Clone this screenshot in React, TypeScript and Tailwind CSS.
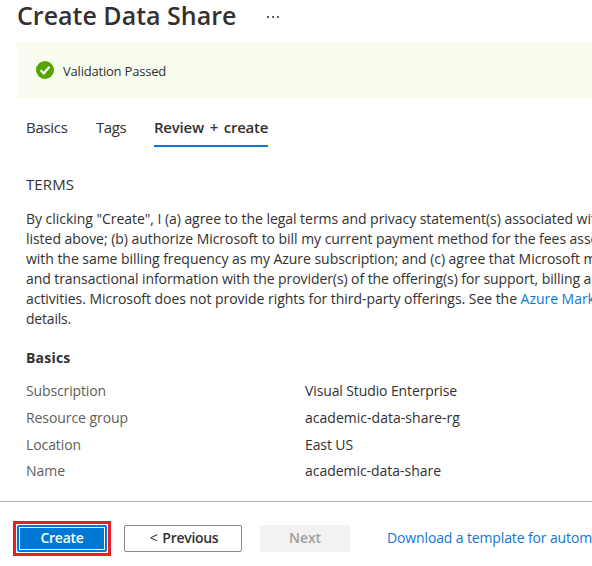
const termsLines = [
  {
    text: 'By clicking "Create", I (a) agree to the legal terms and privacy statement(s) associated with',
    spacing: "tracking-[-0.042px]",
  },
  {
    text: "listed above; (b) authorize Microsoft to bill my current payment method for the fees associated",
    spacing: "tracking-[-0.043px]",
  },
  {
    text: "with the same billing frequency as my Azure subscription; and (c) agree that Microsoft may",
    spacing: "tracking-[-0.041px]",
  },
  {
    text: "and transactional information with the provider(s) of the offering(s) for support, billing and",
    spacing: "tracking-[-0.072px]",
  },
];

const basics = [
  { label: "Subscription", labelSpacing: "tracking-[-0.13px]", value: "Visual Studio Enterprise", valueSpacing: "tracking-[-0.116px]" },
  { label: "Resource group", labelSpacing: "tracking-[-0.072px]", value: "academic-data-share-rg", valueSpacing: "tracking-[0.024px]" },
  { label: "Location", labelSpacing: "tracking-[-0.093px]", value: "East US", valueSpacing: "tracking-[-0.106px]" },
  { label: "Name", labelSpacing: "tracking-[-0.036px]", value: "academic-data-share", valueSpacing: "tracking-[-0.034px]" },
];

function Header() {
  return (
    <header className="flex h-[42px] shrink-0 items-start pl-[17px]">
      <h1 className="w-[250px] text-[25px] leading-[30px] font-semibold">Create Data Share</h1>
      <button aria-label="More" className="flex h-[33px] items-center gap-[3px]">
        <span className="size-[2px] rounded-full bg-[#323130]" />
        <span className="size-[2px] rounded-full bg-[#323130]" />
        <span className="size-[2px] rounded-full bg-[#323130]" />
      </button>
    </header>
  );
}

function ValidationBanner() {
  return (
    <div className="ml-[17px] flex h-14 shrink-0 items-center bg-[#f8fdef] pl-[19px]">
      <svg viewBox="0 0 18 18" className="size-[18px]">
        <circle cx="9" cy="9" r="9" fill="#57a300" />
        <path d="M4.6 9.3 7.7 12.3 13.5 5.8" fill="none" stroke="#fff" strokeWidth="2.2" />
      </svg>
      <span className="pt-px pl-[9px] text-[13px] leading-5 tracking-[-0.205px]">Validation Passed</span>
    </div>
  );
}

function Tabs() {
  return (
    <nav className="flex h-[49px] shrink-0 items-end pl-[26px] text-[15px]">
      <span className="mr-[28px] h-[31px] w-[42px] tracking-[-0.3px]">Basics</span>
      <span className="mr-[28px] h-[31px] w-[30px] tracking-[-0.4px]">Tags</span>
      <span className="h-[31px] w-[114px] border-b-2 border-[#0f78d4] font-semibold tracking-[-0.22px] [word-spacing:2px]">Review + create</span>
    </nav>
  );
}

function Terms() {
  return (
    <section className="pt-[27px] pl-[26px]">
      <h2 className="text-[15px] leading-5 tracking-[0.1px]">TERMS</h2>
      <div className="pt-[15px] leading-5">
        {termsLines.map((line) => (
          <p key={line.text} className={line.spacing}>{line.text}</p>
        ))}
        <p className="tracking-[-0.036px]">
          activities. Microsoft does not provide rights for third-party offerings. See the{" "}
          <a className="text-[#0f78d4]">Azure Marketplace</a>
        </p>
        <p className="tracking-[-0.202px]">details.</p>
      </div>
    </section>
  );
}

function Basics() {
  return (
    <section className="pt-[19px] pl-[26px] leading-5">
      <h2 className="pb-[10px] font-bold tracking-[0.208px]">Basics</h2>
      <dl>
        {basics.map((row) => (
          <div key={row.label} className="flex h-[26.7px] items-center">
            <dt className={`w-[279px] text-[#605e5c] ${row.labelSpacing}`}>{row.label}</dt>
            <dd className={row.valueSpacing}>{row.value}</dd>
          </div>
        ))}
      </dl>
    </section>
  );
}

function Footer() {
  return (
    <footer className="flex h-[65px] shrink-0 items-start border-t border-[#b3b3b3] pt-[19px] pl-[13px] leading-5 font-semibold">
      <div className="h-[35px] w-[98px] shrink-0 border-[3px] border-[#ed1c24] p-px">
        <button className="h-[27px] w-[90px] rounded-[2px] bg-[#0078d4] p-[2px] text-white">
          <span className="flex h-full items-center justify-center border border-white pb-[2px] tracking-[-0.285px]">Create</span>
        </button>
      </div>
      <button className="mt-1 ml-[13px] flex h-[27px] w-[118px] shrink-0 items-center justify-center rounded-[2px] border border-[#8a8886] pb-[2px] pl-[2px] tracking-[-0.294px]">
        <span className="mr-[5px] text-[14px] font-normal">&lt;</span>Previous
      </button>
      <button className="mt-1 ml-[18px] h-[27px] w-[90px] shrink-0 rounded-[2px] bg-[#f3f2f1] pb-[2px] tracking-[-0.07px] text-[#a19f9d]">Next</button>
      <a className="mt-[7px] ml-[37px] shrink-0 font-normal tracking-[-0.13px] text-[#0f78d4]">Download a template for automation</a>
    </footer>
  );
}

export default function App() {
  return (
    <div className="flex h-[566px] w-[592px] flex-col overflow-hidden bg-white font-['Open_Sans','Noto_Sans',sans-serif] text-[14px] whitespace-nowrap text-[#323130]">
      <Header />
      <ValidationBanner />
      <Tabs />
      <div className="h-[354px] shrink-0">
        <Terms />
        <Basics />
      </div>
      <Footer />
    </div>
  );
}
